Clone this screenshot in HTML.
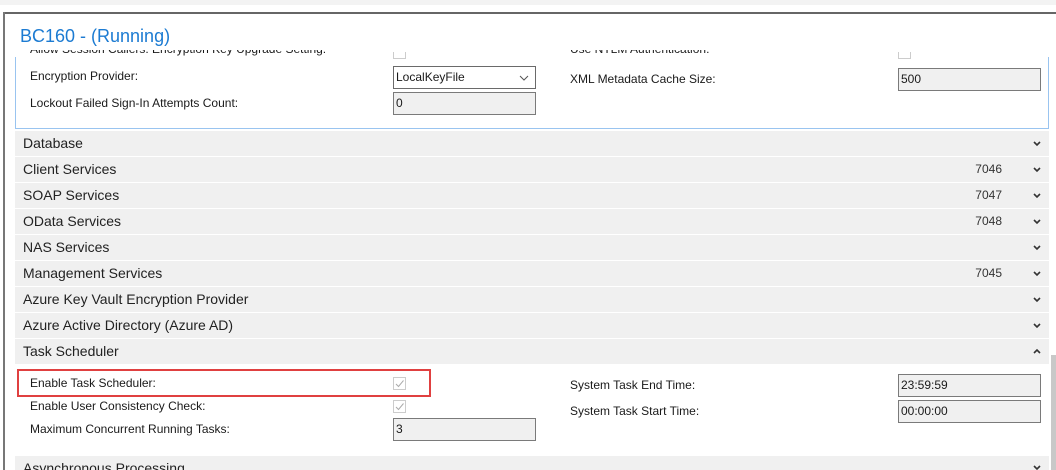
<!DOCTYPE html>
<html><head><style>
*{margin:0;padding:0;box-sizing:border-box}
html,body{width:1056px;height:470px;overflow:hidden}
body{background:#fff;font-family:"Segoe UI","Liberation Sans",sans-serif;position:relative;color:#1a1a1a}
.a{position:absolute}
.lbl{position:absolute;font-size:12px;color:#1a1a1a}
.inp{position:absolute;width:143px;height:23px;border:1px solid #7a7a7a;background:#f0f0f0;font-size:12px;padding:3px 2px;line-height:15px}
.row{position:absolute;left:15px;width:1034px;height:25px;background:#f0f0f0;font-size:14px;line-height:25px;padding-left:8px;color:#222}
.port{position:absolute;right:47px;top:0;font-size:12px;color:#333}
.cb{position:absolute;width:13px;height:13px;border:1px solid #ccc;background:#fff}
</style></head><body>
<div class="a" style="left:0;top:0;width:1056px;height:5px;background:#f3f3f3"></div>
<div class="a" style="left:3px;top:12px;width:1053px;height:2px;background:#666"></div>
<div class="a" style="left:3px;top:12px;width:2px;height:458px;background:#777"></div>
<div class="a" style="left:20px;top:26px;font-size:18px;color:#1c7bd2">BC160 - (Running)</div>
<div class="a" style="left:15px;top:57px;width:1034px;height:72px;border:1px solid #99c4f0;border-top:none;background:#fff"></div>
<div class="a" style="left:0;top:50px;width:1056px;height:8px;overflow:hidden">
<div class="lbl" style="left:30px;top:-8px">Allow Session Callers: Encryption Key Upgrade Setting:</div>
<div class="lbl" style="left:570px;top:-8px">Use NTLM Authentication:</div>
</div>
<div class="cb" style="left:393px;top:52px;height:7px;border-top:none"></div>
<div class="cb" style="left:898px;top:52px;height:7px;border-top:none"></div>
<div class="lbl" style="left:30px;top:69px">Encryption Provider:</div>
<div class="inp" style="left:393px;top:66px;background:#fff;border-color:#6a6a6a">LocalKeyFile<svg style="position:absolute;right:6px;top:8px" width="10" height="6"><path d="M1 1L5 5L9 1" stroke="#555" fill="none"/></svg></div>
<div class="lbl" style="left:30px;top:96px">Lockout Failed Sign-In Attempts Count:</div>
<div class="inp" style="left:393px;top:92px">0</div>
<div class="lbl" style="left:570px;top:72px">XML Metadata Cache Size:</div>
<div class="inp" style="left:898px;top:68px">500</div>

<div class="row" style="top:131px">Database</div>
<div class="row" style="top:157px">Client Services<span class="port">7046</span></div>
<div class="row" style="top:183px">SOAP Services<span class="port">7047</span></div>
<div class="row" style="top:209px">OData Services<span class="port">7048</span></div>
<div class="row" style="top:235px">NAS Services</div>
<div class="row" style="top:261px">Management Services<span class="port">7045</span></div>
<div class="row" style="top:287px">Azure Key Vault Encryption Provider</div>
<div class="row" style="top:313px">Azure Active Directory (Azure AD)</div>
<div class="row" style="top:339px">Task Scheduler</div>
<div class="row" style="top:456px">Asynchronous Processing</div>

<svg class="a" style="left:1033px;top:140px" width="8" height="220">
<g stroke="#333" stroke-width="1.6" fill="none">
<path d="M1 2L4 5L7 2"/><path d="M1 28L4 31L7 28"/><path d="M1 54L4 57L7 54"/><path d="M1 80L4 83L7 80"/><path d="M1 106L4 109L7 106"/><path d="M1 132L4 135L7 132"/><path d="M1 158L4 161L7 158"/><path d="M1 184L4 187L7 184"/><path d="M1 213L4 210L7 213"/>
</g></svg>
<svg class="a" style="left:1033px;top:464px" width="8" height="6"><path d="M1 2L4 5L7 2" stroke="#333" stroke-width="1.6" fill="none"/></svg>
<div class="a" style="left:1051px;top:355px;width:5px;height:115px;background:#c8c8c8"></div>

<div class="a" style="left:17px;top:369px;width:414px;height:28px;border:2px solid #e04040"></div>
<div class="lbl" style="left:30px;top:376px">Enable Task Scheduler:</div>
<div class="cb" style="left:393px;top:377px"><svg width="11" height="11" style="position:absolute;left:0;top:0"><path d="M2 6L4.5 8.5L9.5 2.5" stroke="#aaa" fill="none"/></svg></div>
<div class="lbl" style="left:30px;top:399px">Enable User Consistency Check:</div>
<div class="cb" style="left:393px;top:400px"><svg width="11" height="11" style="position:absolute;left:0;top:0"><path d="M2 6L4.5 8.5L9.5 2.5" stroke="#aaa" fill="none"/></svg></div>
<div class="lbl" style="left:30px;top:422px">Maximum Concurrent Running Tasks:</div>
<div class="inp" style="left:393px;top:418px">3</div>
<div class="lbl" style="left:570px;top:378px">System Task End Time:</div>
<div class="inp" style="left:898px;top:374px">23:59:59</div>
<div class="lbl" style="left:570px;top:404px">System Task Start Time:</div>
<div class="inp" style="left:898px;top:400px">00:00:00</div>
</body></html>
